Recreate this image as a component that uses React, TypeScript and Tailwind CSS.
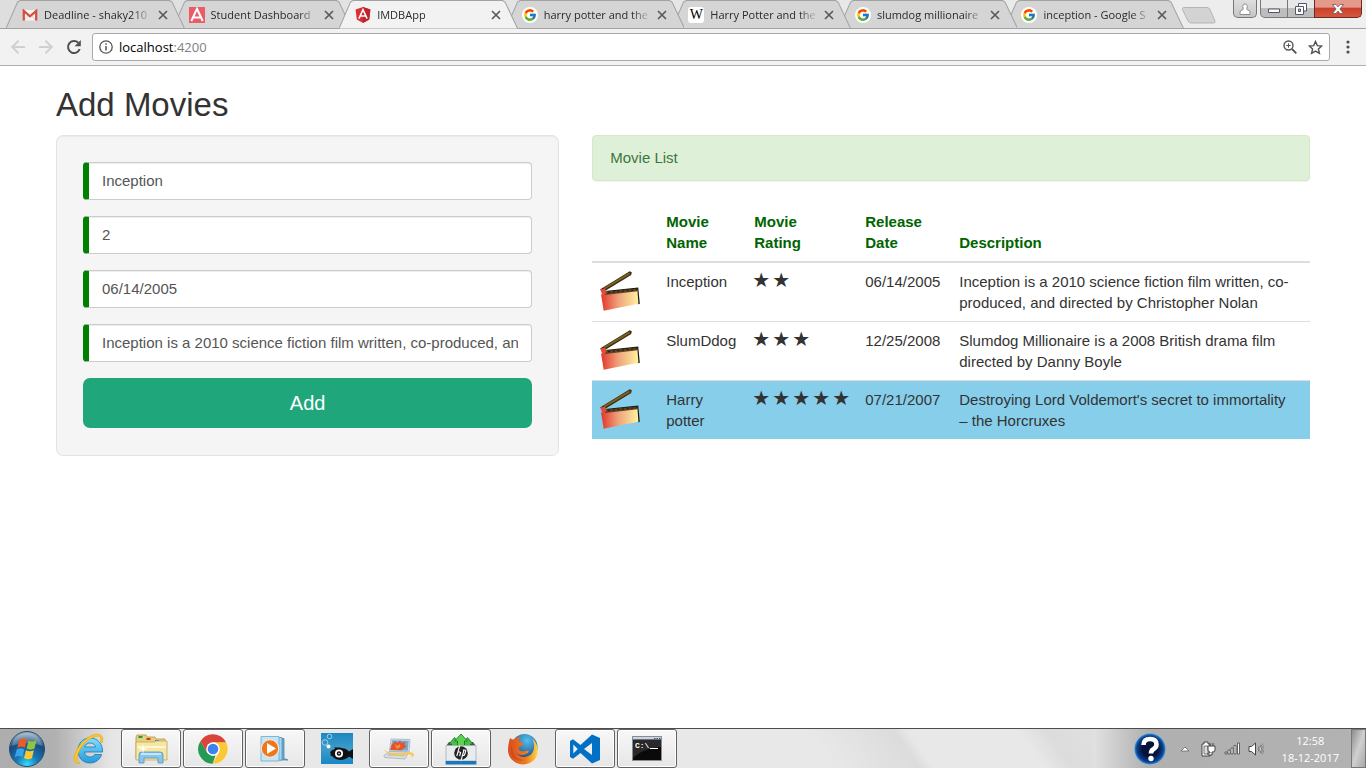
import React from "react";
import { FcGoogle } from "react-icons/fc";

type Movie = { name: string; rating: number; date: string; description: string };

const movies: Movie[] = [
  {
    name: "Inception",
    rating: 2,
    date: "06/14/2005",
    description: "Inception is a 2010 science fiction film written, co-produced, and directed by Christopher Nolan",
  },
  {
    name: "SlumDdog",
    rating: 3,
    date: "12/25/2008",
    description: "Slumdog Millionaire is a 2008 British drama film directed by Danny Boyle",
  },
  {
    name: "Harry potter",
    rating: 5,
    date: "07/21/2007",
    description: "Destroying Lord Voldemort's secret to immortality – the Horcruxes",
  },
];

const fields = [
  { label: "Movie name", value: "Inception" },
  { label: "Movie rating", value: "2" },
  { label: "Release date", value: "06/14/2005" },
  {
    label: "Description",
    value: "Inception is a 2010 science fiction film written, co-produced, and directed by Christopher Nolan",
  },
];

/* ---------- favicons ---------- */

function GmailIcon() {
  return (
    <svg viewBox="0 0 16 16" className="size-4">
      <path d="M2 3h12v10.500H2z" fill="#f3f3f3" />
      <path d="M2 13.500 7 8M14 13.500 9 8" stroke="#d0d0d0" fill="none" />
      <path d="M1.800 13.500V4L8 9.300 14.200 4v9.500" stroke="#d54b3d" strokeWidth="2.200" fill="none" />
    </svg>
  );
}

function AngularSquareIcon() {
  return (
    <svg viewBox="0 0 16 16" className="size-4">
      <path d="M0 0h16v16H0z" fill="#ea5c66" />
      <path d="M2.300 14 8 1.800 13.700 14M4.600 10.500h6.800" stroke="#fff" strokeWidth="2" fill="none" />
    </svg>
  );
}

function AngularShieldIcon() {
  return (
    <svg viewBox="0 0 16 16" className="size-4">
      <path d="M8 0 .6 2.600l1.200 9.800L8 16l6.200-3.600 1.200-9.800z" fill="#dd2e35" />
      <path d="M8 0v16l6.200-3.600 1.200-9.800z" fill="#b9262c" />
      <path d="M3.900 11.600 8 2.600l4.100 9M5.500 9h5" stroke="#fff" strokeWidth="1.500" fill="none" />
    </svg>
  );
}

function GoogleIcon() {
  return (
    <span className="flex size-4 items-center justify-center rounded-full bg-white">
      <FcGoogle className="size-3.5" />
    </span>
  );
}

function WikiIcon() {
  return (
    <span className="flex size-4 items-center justify-center rounded-[3px] bg-white font-['Liberation_Serif',serif] text-[14px] leading-none text-black">
      W
    </span>
  );
}

/* ---------- browser chrome ---------- */

const tabs = [
  { title: "Deadline - shaky210", icon: <GmailIcon />, layer: "z-[7]" },
  { title: "Student Dashboard", icon: <AngularSquareIcon />, layer: "z-[6]" },
  { title: "IMDBApp", icon: <AngularShieldIcon />, layer: "z-10", active: true },
  { title: "harry potter and the", icon: <GoogleIcon />, layer: "z-[4]" },
  { title: "Harry Potter and the", icon: <WikiIcon />, layer: "z-[3]" },
  { title: "slumdog millionaire", icon: <GoogleIcon />, layer: "z-[2]" },
  { title: "inception - Google S", icon: <GoogleIcon />, layer: "z-[1]" },
];

function Tab({ title, icon, layer, active }: { title: string; icon: React.ReactNode; layer: string; active?: boolean }) {
  return (
    <div className={`relative -ml-3 h-[29px] min-w-0 flex-1 first:ml-0 ${layer}`}>
      <svg viewBox="0 0 178 29" preserveAspectRatio="none" className="absolute inset-0 size-full">
        <path d="M0 28.500 11.500 2 14 .5H163l2.500 1.500L178 28.500z" fill={active ? "#f2f2f2" : "#d5d5d5"} />
        <path d="M0 28.500 11.500 2 14 .5H163l2.500 1.500L178 28.500" fill="none" stroke="#a2a2a2" />
        {!active && <path d="M0 28.500H178" stroke="#a2a2a2" />}
      </svg>
      <div className="relative flex h-[29px] items-center pl-4 pr-[17px]">
        {icon}
        <a
          href="#"
          className="ml-[6px] min-w-0 flex-1 overflow-hidden whitespace-nowrap font-['Open_Sans',sans-serif] text-[11px] leading-4 text-[#2a2a2a] [mask-image:linear-gradient(to_right,#000_82%,transparent)]"
        >
          {title}
        </a>
        <button type="button" aria-label={`Close ${title}`} className="ml-[6px]">
          <svg viewBox="0 0 10 10" className="size-[10px]">
            <path d="M1 1l8 8M9 1 1 9" stroke="#5a5a5a" strokeWidth="1.700" />
          </svg>
        </button>
      </div>
    </div>
  );
}

function WindowControls() {
  return (
    <div className="flex h-[18px] items-stretch">
      <button
        type="button"
        aria-label="Profile"
        className="mr-[3px] flex w-6 items-center justify-center rounded-b-[5px] border border-t-0 border-[#777] bg-linear-to-b from-[#dedede] to-[#c6c6c6]"
      >
        <svg viewBox="0 0 12 12" className="size-3">
          <path d="M1 11.500V9q0-1.500 2.500-2.200Q5 6.500 4 5.300 3 1 6 1t2 4.300Q7 6.500 8.500 6.800 11 7.500 11 9v2.500z" fill="#fff" stroke="#8d8d8d" />
        </svg>
      </button>
      <button
        type="button"
        aria-label="Minimize"
        className="flex w-7 items-center justify-center rounded-bl-[5px] border border-t-0 border-[#777] bg-linear-to-b from-[#e8e8e8] from-45% to-[#bdbdbd] to-50%"
      >
        <svg viewBox="0 0 12 12" className="size-3">
          <path d="M.5 6h11v3.500H.5z" fill="#fff" stroke="#535666" />
        </svg>
      </button>
      <button
        type="button"
        aria-label="Restore"
        className="flex w-[26px] items-center justify-center border-b border-[#777] bg-linear-to-b from-[#e8e8e8] from-45% to-[#bdbdbd] to-50%"
      >
        <svg viewBox="0 0 12 12" className="size-3">
          <path d="M3.500.5h8v7.500h-8z" fill="#fff" stroke="#535666" />
          <path d="M.5 3.500h8v8h-8z" fill="#fff" stroke="#535666" />
          <path d="M3.500 6h2v2.500h-2z" fill="#bbb" stroke="#535666" />
        </svg>
      </button>
      <button
        type="button"
        aria-label="Close window"
        className="flex w-12 items-center justify-center rounded-br-[5px] border border-t-0 border-[#6d2a20] bg-linear-to-b from-[#e39a8a] from-40% via-[#cc402b] via-50% to-[#d4573f]"
      >
        <svg viewBox="0 0 12 10" className="h-[10px] w-3">
          <path d="M.5.5h3.500l2 2.400L8 .5h3.500L7.900 5l3.600 4.500H8L6 7.100 4 9.500H.5L4.100 5z" fill="#fff" stroke="#67595c" strokeWidth=".8" />
        </svg>
      </button>
    </div>
  );
}

function BrowserChrome() {
  return (
    <header className="border-b border-[#aeaeae] bg-[#f2f2f2]">
      <div className="flex h-[29px] border-b border-[#a2a2a2] bg-linear-to-r from-[#dedede] via-[#e6e6e6] to-[#efefef]">
        <nav aria-label="Tabs" className="flex min-w-0 flex-1 pl-[6px]">
          {tabs.map((t) => (
            <Tab key={t.title} {...t} />
          ))}
        </nav>
        <button type="button" aria-label="New tab" className="ml-[-3px] mr-4 mt-[6px] h-[19px] w-9">
          <svg viewBox="0 0 36 19" className="h-[19px] w-9">
            <path d="M2.500 1.500H26q2 0 3 2l5 11.500q.5 2-1.500 2H10q-2 0-3-2L1.500 3.500q-.5-2 1-2z" fill="#d3d3d3" stroke="#b5b5b5" />
          </svg>
        </button>
        <div className="pr-1">
          <WindowControls />
        </div>
      </div>
      <div className="flex h-9 items-center px-[10px]">
        <div className="flex items-center gap-3">
          <button type="button" aria-label="Back">
            <svg viewBox="0 0 16 16" className="size-4">
              <path d="M15 8H2.500M8.500 1.800 2.200 8l6.300 6.200" stroke="#cfcfcf" strokeWidth="1.900" fill="none" />
            </svg>
          </button>
          <button type="button" aria-label="Forward">
            <svg viewBox="0 0 16 16" className="size-4">
              <path d="M1 8h12.500M7.500 1.800 13.800 8l-6.300 6.200" stroke="#cfcfcf" strokeWidth="1.900" fill="none" />
            </svg>
          </button>
          <button type="button" aria-label="Reload">
            <svg viewBox="0 0 16 16" className="size-4">
              <path d="M13.700 10A6 6 0 1 1 12.300 3.800" stroke="#505050" strokeWidth="2" fill="none" />
              <path d="M14.800 1v6.200H8.600z" fill="#505050" />
            </svg>
          </button>
        </div>
        <div className="ml-[10px] flex h-7 flex-1 items-center rounded-[3px] border border-[#a9a9a9] bg-white px-[6px]">
          <svg viewBox="0 0 14 14" className="size-[14px]">
            <circle cx="7" cy="7" r="6.200" fill="none" stroke="#555" strokeWidth="1.300" />
            <path d="M7 6v4.500M7 3.300v1.500" stroke="#555" strokeWidth="1.500" />
          </svg>
          <p className="ml-[6px] flex-1 font-['Open_Sans',sans-serif] text-[13px] leading-5 text-black">
            localhost<span className="text-[#808080]">:4200</span>
          </p>
          <button type="button" aria-label="Zoom">
            <svg viewBox="0 0 14 14" className="size-[14px]">
              <circle cx="5.500" cy="5.500" r="4.500" fill="none" stroke="#555" strokeWidth="1.400" />
              <path d="M9 9l4.300 4.300" stroke="#555" strokeWidth="1.900" />
              <path d="M3.300 5.500h4.400M5.500 3.300v4.400" stroke="#555" />
            </svg>
          </button>
          <button type="button" aria-label="Bookmark" className="ml-[11px]">
            <svg viewBox="0 0 15 15" className="size-[15px]">
              <path d="m7.500 1.500 1.800 4.100 4.400.4-3.300 3 1 4.400-3.900-2.300-3.900 2.300 1-4.400-3.300-3 4.400-.4z" fill="none" stroke="#505050" strokeWidth="1.400" />
            </svg>
          </button>
        </div>
        <button type="button" aria-label="Menu" className="ml-[10px]">
          <svg viewBox="0 0 16 16" className="size-4">
            <circle cx="8" cy="3" r="1.600" fill="#505050" />
            <circle cx="8" cy="8" r="1.600" fill="#505050" />
            <circle cx="8" cy="13" r="1.600" fill="#505050" />
          </svg>
        </button>
      </div>
    </header>
  );
}

/* ---------- page ---------- */

function Clapper({ id }: { id: string }) {
  return (
    <svg viewBox="1 1 39 39" className="block size-10">
      <defs>
        <linearGradient id={id} x1="0" x2="1">
          <stop offset="0" stopColor="#e2352a" />
          <stop offset=".45" stopColor="#efa07a" />
          <stop offset="1" stopColor="#fff3a0" />
        </linearGradient>
      </defs>
      <path d="M1 19 30 1.300l2 .9-.6 2.600L5 21z" fill="#3a2c10" />
      <path d="m5 18.300 25-15" stroke="#7d6124" strokeWidth="1.900" />
      <path d="m6 20.500 32.300-3.300 1.500 15.800-1.600.4z" fill="#15130f" />
      <path d="m2 24 35.500-4 1 13L4.600 39.800z" fill={`url(#${id})`} />
      <path d="m5.500 21.300 32-3.200.2 2.600-32.200 3.800z" fill="#5f4222" />
      <path d="m9 22 28-3" stroke="#2c1f0f" strokeWidth="1.200" strokeDasharray="2 2.500" />
      <path d="m1.200 19 4.800-.8 1.300 4.500L3.500 25z" fill="#e34c3c" />
    </svg>
  );
}

function MovieForm() {
  return (
    <form className="rounded-[7px] border border-[#e3e3e3] bg-[#f5f5f5] px-[26px] pb-[27px] pt-[26px] shadow-[inset_0_1px_1px_rgba(0,0,0,0.05)]">
      <div className="flex flex-col gap-4">
        {fields.map((f) => (
          <input
            key={f.label}
            type="text"
            aria-label={f.label}
            defaultValue={f.value}
            className="h-[38px] w-full rounded-[4px] border border-l-[6px] border-[#ccc] border-l-[#008000] bg-white px-[13px] pb-0.5 text-[15px] leading-[21px] text-[#555] shadow-[inset_0_1px_1px_rgba(0,0,0,0.075)] outline-none"
          />
        ))}
        <button type="button" className="h-[50px] w-full rounded-[7px] bg-[#20a67b] text-[20px] text-white">
          Add
        </button>
      </div>
    </form>
  );
}

function MovieTable() {
  return (
    <table className="w-full table-fixed border-separate border-spacing-0 text-left text-[15px] leading-[21px]">
      <thead>
        <tr className="align-bottom text-[#006400] [&>th]:border-b-2 [&>th]:border-[#ddd] [&>th]:p-2 [&>th]:font-bold">
          <th className="w-[66px]" aria-label="Poster" />
          <th className="w-[88px]">
            Movie
            <br />
            Name
          </th>
          <th className="w-[111px]">
            Movie
            <br />
            Rating
          </th>
          <th className="w-[94px]">
            Release
            <br />
            Date
          </th>
          <th>Description</th>
        </tr>
      </thead>
      <tbody>
        {movies.map((m, i) => (
          <tr
            key={m.name}
            className={`align-top [&>td]:border-[#ddd] [&>td]:py-2 [&>td]:pl-2 ${i > 0 ? "[&>td]:border-t" : ""} ${i === 2 ? "bg-[#87ceeb]" : ""}`}
          >
            <td>
              <Clapper id={`board-${i}`} />
            </td>
            <td className="pr-2">{m.name}</td>
            <td>
              <span className="-ml-0.5 flex gap-0.5 font-['DejaVu_Sans',sans-serif] text-[20px] leading-[18px]">
                {Array.from({ length: m.rating }, (_, n) => (
                  <span key={n} className="w-[18px] text-center">
                    ★
                  </span>
                ))}
              </span>
            </td>
            <td className="whitespace-nowrap">{m.date}</td>
            <td className="pr-4">{m.description}</td>
          </tr>
        ))}
      </tbody>
    </table>
  );
}

/* ---------- taskbar ---------- */

function StartIcon() {
  return (
    <svg viewBox="0 0 36 36" className="size-9">
      <defs>
        <radialGradient id="orb" cx=".5" cy=".95" r=".9">
          <stop offset="0" stopColor="#35e0ff" />
          <stop offset=".35" stopColor="#1878b4" />
          <stop offset=".75" stopColor="#174a7c" />
          <stop offset="1" stopColor="#8fa9bd" />
        </radialGradient>
      </defs>
      <circle cx="18" cy="18" r="17.500" fill="url(#orb)" stroke="#254f6e" />
      <path d="M3 15C5 5 12 2 18 2s13 4 15 13c-9-4-20-4-30 0z" fill="#fff" opacity=".25" />
      <path d="M10.500 9c2.500-1.800 5-1.800 7.500-.2l-2 8c-2.500-1.500-5-1.600-7.800 0z" fill="#ef5a24" />
      <path d="M19.500 9.500c2.500 1.500 5 1.400 8-.2l-2 8.200c-2.600 1.500-5.200 1.500-7.900 0z" fill="#8dc63f" />
      <path d="M7.700 18.500c2.600-1.600 5.200-1.500 7.600 0l-1.900 7.700c-2.500-1.500-5-1.600-7.700.2z" fill="#37a4e8" />
      <path d="M17 19.200c2.600 1.500 5.200 1.500 7.900 0l-2 8c-2.600 1.600-5.200 1.500-7.900-.1z" fill="#fdc72f" />
    </svg>
  );
}

function ExplorerBrowserIcon() {
  return (
    <svg viewBox="0 0 32 32" className="size-8">
      <defs>
        <linearGradient id="ie" x1="0" y1="0" x2="0" y2="1">
          <stop offset="0" stopColor="#85dcff" />
          <stop offset="1" stopColor="#259bd9" />
        </linearGradient>
      </defs>
      <path
        d="M29.500 19H11.500c.3 3.500 2.500 5 5.500 5 2.300 0 3.700-.9 4.600-2.500h7C27 26.700 22.500 30 17 30 10 30 5 25 5 17.500S10 5 17 5c8 0 12.900 6 12.500 14zm-7-5c-.5-2.500-2.500-4-5.300-4s-4.800 1.500-5.500 4z"
        fill="url(#ie)"
        stroke="#1778b5"
        strokeWidth=".8"
      />
      <path
        d="M29 10C31.500 2.500 27-.5 20 2 11 5.500 3 15.500 1.200 23.500.2 29.500 3 31.500 7 30c-3.500.2-4-3-2.500-7.500C7 14 14 6.500 21 4c5-1.800 7.500-.5 6.500 4.500z"
        fill="#fbc827"
        stroke="#e2a40e"
        strokeWidth=".6"
      />
    </svg>
  );
}

function FoldersIcon() {
  return (
    <svg viewBox="0 0 34 32" className="h-8 w-[34px]">
      <path d="M2 4 3 2h9l1 2h8l1 2h9v20H2z" fill="#e8cf7f" stroke="#b4964a" strokeWidth=".8" />
      <path d="M4.500 3h4v2h-4z" fill="#1a9e35" />
      <path d="M12.500 5h4v2h-4z" fill="#d33a22" />
      <path d="M21 7h4v2h-4z" fill="#3190dd" />
      <path d="M2 9h19l1-1h11v19H2z" fill="#f6e6a6" stroke="#c2a75c" strokeWidth=".8" />
      <path d="M3 14h29" stroke="#fff6cc" strokeWidth="2" />
      <path d="M5 30v-8q0-3 3-3h18q3 0 3 3v8h-5v-5H10v5z" fill="#8bc6ea" stroke="#4a93c6" strokeWidth=".8" />
      <path d="M7 21h20" stroke="#d6efff" strokeWidth="1.500" />
      <path d="m9 11 .8 4.200L14 16l-4.200.8L9 21l-.8-4.200L4 16l4.200-.8z" fill="#fff" />
    </svg>
  );
}

function ChromeIcon() {
  return (
    <svg viewBox="0 0 30 30" className="size-[30px]">
      <path d="M15 8.200h13A14.700 14.700 0 0 1 14.500 29.700L20.900 18.400z" fill="#fcc934" />
      <path d="M2.400 7.200 9.100 18.400 14 21.800l3.500-.4-3 8.300A14.700 14.700 0 0 1 2.400 7.200z" fill="#249a53" />
      <path d="M2.400 7.200 9.100 18.400 13 10l2-1.800h13A14.700 14.700 0 0 0 2.400 7.200z" fill="#d9453a" />
      <circle cx="15" cy="15" r="6.800" fill="#fff" />
      <circle cx="15" cy="15" r="5.300" fill="#3f82ee" />
    </svg>
  );
}

function MediaPlayerIcon() {
  return (
    <svg viewBox="0 0 32 28" className="h-7 w-8">
      <path d="M14 3.500h11v20l4 1.500H14z" fill="#6ba8cb" stroke="#4d88b0" strokeWidth=".8" />
      <path d="M10 2.500h13v22.500H10z" fill="#a9d6ee" stroke="#5795ba" strokeWidth=".8" />
      <path d="M2 1.500h18v24.500H2z" fill="#c5e4f4" stroke="#6da7c6" strokeWidth=".8" />
      <circle cx="11" cy="13.500" r="8.800" fill="#f17616" stroke="#e4e4e4" strokeWidth="1.300" />
      <path d="M8 8v11l9-5.500z" fill="#fff" />
    </svg>
  );
}

function FishIcon() {
  return (
    <svg viewBox="0 0 32 31" className="h-[31px] w-8">
      <defs>
        <linearGradient id="sea" x1="0" y1="0" x2="0" y2="1">
          <stop offset="0" stopColor="#1c88c0" />
          <stop offset=".5" stopColor="#3e9bca" />
          <stop offset="1" stopColor="#1788c6" />
        </linearGradient>
      </defs>
      <path d="M0 0h32v31H0z" fill="url(#sea)" />
      <circle cx="4" cy="9.500" r="2.800" fill="none" stroke="#9bd3ee" />
      <circle cx="8.500" cy="3.500" r="2.300" fill="none" stroke="#9bd3ee" />
      <circle cx="7.500" cy="13.500" r="2" fill="#fff" />
      <path d="M9 19.500c3-5 15-6.500 19-1l4-2.500v10l-4-2.500c-4 4.500-13 4.500-16.500 0l-2.500-1.500 1-1z" fill="#111" />
      <path d="M13 14.500h7l-2 2-3 .5z" fill="#111" />
      <circle cx="18" cy="20.500" r="4" fill="#fff" />
      <circle cx="18" cy="20.500" r="2.200" fill="#111" />
      <circle cx="18" cy="20.500" r=".8" fill="#fff" />
    </svg>
  );
}

function LaptopIcon() {
  return (
    <svg viewBox="0 0 32 22" className="h-[22px] w-8">
      <path d="m8 1 19 .5-1 12.500-19.500-.5z" fill="#d9e4ee" stroke="#9eb0c2" strokeWidth=".8" />
      <path d="m9 2.300 16.700.4-.9 10-17-.4z" fill="#77a8d6" />
      <path d="m8.500 7 2-2 1.500-2 2.500 2L17 2.500l1.500 2.300 4-1-1 2.500 2 2.500-3.500 2-1 1.500-12-.3z" fill="#e2542a" />
      <path d="m12 6 2.500 2L17 6l.5 3-4 2z" fill="#f39140" />
      <path d="M6.500 13.500 1 17.500q-.5 1.500 1 2L22 21l4-7z" fill="#d8dfe5" stroke="#a3aeb8" strokeWidth=".8" />
      <path d="m7 15 16 .8-1.500 2.700L4 17.500z" fill="#b4bec7" />
      <path d="M1 11.500c4 3.500 12 5 21 3 5-1 9 0 9 2.500 0 2-3 3-5 2.500 3-.2 4-1.500 2-2.500-2-.8-4-.2-6 .2-9 1.800-18-.2-21-5.700z" fill="#f8c75e" />
    </svg>
  );
}

function HpIcon() {
  return (
    <svg viewBox="0 0 32 32" className="size-8">
      <path d="M1 13 4 9h24l3 4z" fill="#4f565c" />
      <path d="M4 11 9.500 4.500 15 11h-2.500v2h-6v-2zM17 11l5.500-6.500L28 11h-2.500v2h-6v-2z" fill="#49c144" stroke="#157225" strokeWidth=".8" />
      <path d="M9.500 8 16 1l6.500 7H19.500v5h-7V8z" fill="#5bd350" stroke="#157225" strokeWidth=".8" />
      <path d="M1 12.500h30V28H1z" fill="#e9ecef" stroke="#a7adb3" strokeWidth=".8" />
      <path d="M.6 28h30.800v3.500H.6z" fill="#1878bd" />
      <circle cx="16" cy="20" r="6.800" fill="#222" />
      <path d="m14.800 12.500-3 10.500M13 19h1.800q1 0 .7 1l-.9 3M19 17l-3 10.500M17.800 17h2.200q1 0 .7 1l-1 3.500q-.3 1-1.300 1h-1.500" stroke="#fff" strokeWidth="1.100" fill="none" />
    </svg>
  );
}

function FirefoxIcon() {
  return (
    <svg viewBox="0 0 32 32" className="size-8">
      <defs>
        <radialGradient id="globe" cx=".6" cy=".25" r=".8">
          <stop offset="0" stopColor="#53bfee" />
          <stop offset="1" stopColor="#173d7c" />
        </radialGradient>
        <linearGradient id="fox" x1="0" x2="1">
          <stop offset="0" stopColor="#d94c1e" />
          <stop offset=".6" stopColor="#ee7a20" />
          <stop offset="1" stopColor="#ffd53c" />
        </linearGradient>
      </defs>
      <circle cx="17.500" cy="14" r="13" fill="url(#globe)" />
      <path
        d="M3 5c1.500 1 2.500 1.500 4 1.500C9 4.500 11 4 13 4l-1.500 4c2 1 4 1.500 5 3-1 2-4 2-5 4 0 3 4 4 7 3 2-.6 3-.5 3.500.5-3 4-9 5-13 1 3 5 10 6 15 2 4-4 4-11 1-16 3 2 6 7 5.500 12C31 26 24 31.500 16 31.500S1 25 1 17C1 12 2 9 3 5z"
        fill="url(#fox)"
      />
      <path d="M5 12c0 9 5 15 13 15-5 2-12 0-14-6-.8-3-.4-6 1-9z" fill="#c43c20" opacity=".45" />
    </svg>
  );
}

function CodeIcon() {
  return (
    <svg viewBox="0 0 30 30" className="size-[30px]">
      <path
        fillRule="evenodd"
        d="m22 .5 8 3.500v22l-8 3.500L10.500 19 3 24.800 0 23V7l3-1.800L10.500 11zM22 9l-8 6 8 6zM3.300 10.500v9L7.800 15z"
        fill="#0071c5"
      />
    </svg>
  );
}

function ConsoleIcon() {
  return (
    <svg viewBox="0 0 30 25" className="h-[25px] w-[30px]">
      <path d="M.5.500h29v24H.5z" fill="#0a0a0a" stroke="#8b8b8b" />
      <path d="M1 1h28v2.500H1z" fill="#c9d5e2" />
      <path d="M22 2.500h1.500M24.500 2.500H26M27 2.500h1.500" stroke="#40566e" />
      <path d="M1 4h28v7C18 12 10 14 1 22z" fill="#fff" opacity=".13" />
      <text x="3" y="12" fontFamily="Liberation Mono" fontWeight="700" fontSize="8" fill="#fff">
        C:\_
      </text>
      <path d="M18 12.500h8" stroke="#fff" />
    </svg>
  );
}

const apps = [
  { name: "Internet Explorer", icon: <ExplorerBrowserIcon />, open: false },
  { name: "Windows Explorer", icon: <FoldersIcon />, open: true },
  { name: "Google Chrome", icon: <ChromeIcon />, open: true },
  { name: "Media Player", icon: <MediaPlayerIcon />, open: true },
  { name: "Fish", icon: <FishIcon />, open: false },
  { name: "Display", icon: <LaptopIcon />, open: true },
  { name: "HP Updates", icon: <HpIcon />, open: true },
  { name: "Firefox", icon: <FirefoxIcon />, open: false },
  { name: "Code", icon: <CodeIcon />, open: true },
  { name: "Command Prompt", icon: <ConsoleIcon />, open: true },
];

function Taskbar() {
  return (
    <footer className="flex h-10 border-t border-[#4c4c4c] bg-[linear-gradient(to_right,#adadad_0,#b0b0b0_4%,#e4e4e4_8%,transparent_9%,transparent_80%,#e2e2e2_80%,#b0b0b0_84%,#b2b2b2_100%),linear-gradient(55deg,#e8e8e8_60%,#dcdcdc_66%,#e8e8e8_67%,#e8e8e8_75%,#dcdcdc_77%,#e4e4e4_85%)]">
      <button type="button" aria-label="Start" className="flex w-[54px] items-center justify-center">
        <StartIcon />
      </button>
      <div className="ml-[5px] flex gap-0.5">
        {apps.map((a) => (
          <button
            key={a.name}
            type="button"
            aria-label={a.name}
            className={`flex w-15 items-center justify-center ${
              a.open
                ? "rounded-[3px] border border-[#626262] bg-linear-to-b from-[#f8f8f8] to-[#e6e6e6] shadow-[inset_0_0_0_1px_#fff]"
                : ""
            }`}
          >
            {a.icon}
          </button>
        ))}
      </div>
      <div className="ml-auto flex items-center">
        <svg viewBox="0 0 32 32" className="size-8">
          <defs>
            <radialGradient id="help" cx=".5" cy=".5" r=".5">
              <stop offset=".5" stopColor="#06123a" />
              <stop offset=".85" stopColor="#0c3f8d" />
              <stop offset="1" stopColor="#2b95e8" />
            </radialGradient>
          </defs>
          <circle cx="16" cy="16" r="15.500" fill="url(#help)" />
          <path d="M9.500 12q0-6 6.500-6t6.500 5.500q0 3-3.500 5-2 1.300-2 4" stroke="#fff" strokeWidth="4.600" fill="none" />
          <circle cx="17" cy="25.500" r="2.700" fill="#fff" />
        </svg>
        <svg viewBox="0 0 10 6" className="ml-[14px] h-[6px] w-[10px]">
          <path d="M1 5 5 1l4 4z" fill="#fff" stroke="#666" strokeWidth=".8" />
        </svg>
        <svg viewBox="0 0 16 16" className="ml-[10px] size-4">
          <path d="M2 3h2V1h4v2h2v12H2z" fill="#fff" stroke="#444" />
          <path d="M4 5h4v8H4z" fill="#ddd" stroke="#777" />
          <path d="M8 5h7v4q0 2-2 2h-1v3H8v-2h2v-1q-2 0-2-2zM10 5V2M13 5V2" fill="#fff" stroke="#444" />
        </svg>
        <svg viewBox="0 0 17 13" className="ml-2 h-[13px] w-[17px]">
          <path d="M1 10h2v2H1zM4 8h2v4H4zM7 6h2v6H7zM10 3.500h2V12h-2zM13.500 1h2v11h-2z" fill="#fff" stroke="#555" strokeWidth=".9" />
        </svg>
        <svg viewBox="0 0 17 14" className="ml-[7px] h-[14px] w-[17px]">
          <path d="M1 4.500h2.500L7.500 1v12L3.500 9.500H1z" fill="#fff" stroke="#444" />
          <path d="M9.500 5q1.300 2 0 4M11.500 3.500q2.300 3.500 0 7M13.500 2q3.500 5 0 10" fill="none" stroke="#444" strokeWidth="1.700" />
          <path d="M9.500 5q1.300 2 0 4M11.500 3.500q2.300 3.500 0 7M13.500 2q3.500 5 0 10" fill="none" stroke="#fff" strokeWidth=".8" />
        </svg>
        <p className="ml-[17px] text-center font-['Open_Sans',sans-serif] text-[11px] leading-[17px] text-white">
          12:58
          <br />
          18-12-2017
        </p>
        <button
          type="button"
          aria-label="Show desktop"
          className="ml-3 h-full w-[15px] border border-[#777] bg-linear-to-br from-[#8e8e8e] via-[#d0d0d0] to-[#a8a8a8]"
        />
      </div>
    </footer>
  );
}

export default function App() {
  return (
    <div className="flex min-h-screen flex-col bg-white font-['Liberation_Sans',Arial,sans-serif] text-[15px] text-[#333]">
      <BrowserChrome />
      <main className="flex-1 px-14 pt-[21px]">
        <h2 className="mb-3 text-[33px] leading-9">Add Movies</h2>
        <div className="grid grid-cols-12 items-start gap-x-[33px]">
          <section className="col-span-5">
            <MovieForm />
          </section>
          <section className="col-span-7">
            <div className="mb-[22px] flex h-[46px] items-center rounded-[4px] border border-[#d6e9c6] bg-[#dff0d8] px-[17px] text-[#3c763d] shadow-[0_1px_1px_rgba(0,0,0,0.05)]">
              Movie List
            </div>
            <MovieTable />
          </section>
        </div>
      </main>
      <Taskbar />
    </div>
  );
}
